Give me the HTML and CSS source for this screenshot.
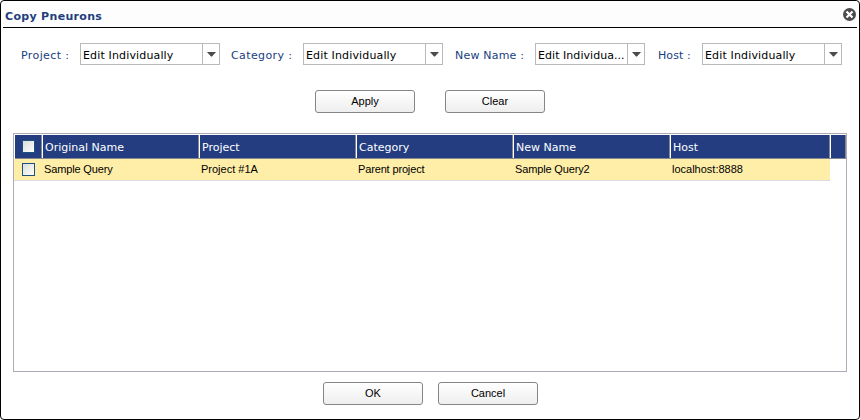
FILE: index.html
```html
<!DOCTYPE html>
<html lang="en">
<head>
<meta charset="utf-8">
<title>Copy Pneurons</title>
<link rel="stylesheet" href="styles.css">
</head>
<body>
<main class="dialog">
  <header class="titlebar">
    <h1>Copy Pneurons</h1>
    <svg class="close" width="13" height="13" viewBox="0 0 13 13" aria-label="Close"><circle cx="6.5" cy="6.5" r="6.5" fill="#4b4b4b"/><path d="M3.5 3.5 9.5 9.5M9.5 3.5 3.5 9.5" stroke="#fff" stroke-width="2.2"/></svg>
  </header>
  <section class="filters">
    <span class="label project">Project :</span>
    <div class="select"><span class="value">Edit Individually</span><span class="arrow"><svg width="9" height="5" viewBox="0 0 9 5"><path d="M0 0h9L5 4.5H4z"/></svg></span></div>
    <span class="label category">Category :</span>
    <div class="select"><span class="value">Edit Individually</span><span class="arrow"><svg width="9" height="5" viewBox="0 0 9 5"><path d="M0 0h9L5 4.5H4z"/></svg></span></div>
    <span class="label newname">New Name :</span>
    <div class="select narrow"><span class="value">Edit Individua...</span><span class="arrow"><svg width="9" height="5" viewBox="0 0 9 5"><path d="M0 0h9L5 4.5H4z"/></svg></span></div>
    <span class="label host">Host :</span>
    <div class="select"><span class="value">Edit Individually</span><span class="arrow"><svg width="9" height="5" viewBox="0 0 9 5"><path d="M0 0h9L5 4.5H4z"/></svg></span></div>
  </section>
  <div class="actions"><button>Apply</button><button>Clear</button></div>
  <section class="grid">
    <div class="row head">
      <div class="cell"><span class="check"></span></div>
      <div class="cell">Original Name</div>
      <div class="cell">Project</div>
      <div class="cell">Category</div>
      <div class="cell">New Name</div>
      <div class="cell">Host</div>
      <div class="cell"></div>
    </div>
    <div class="row item">
      <div class="cell"><span class="check"></span></div>
      <div class="cell tight">Sample Query</div>
      <div class="cell">Project #1A</div>
      <div class="cell tight">Parent project</div>
      <div class="cell tight">Sample Query2</div>
      <div class="cell">localhost:8888</div>
    </div>
  </section>
  <footer class="footer"><button>OK</button><button>Cancel</button></footer>
</main>
</body>
</html>
```
FILE: styles.css
```css
* { box-sizing: border-box; }
body { margin: 0; background: #fff; font-family: "DejaVu Sans", Verdana, sans-serif; font-size: 11px; color: #000; }
.dialog { width: 860px; height: 420px; border: 1px solid #000; border-radius: 4px; background: #fff; overflow: hidden; }
.titlebar { display: flex; justify-content: space-between; height: 27px; margin: 0 2px; padding: 7px 0 0 2px; border-bottom: 1px solid #000; background: #fdfdfd; }
h1 { margin: 0; font-size: 11px; line-height: 18px; font-weight: bold; letter-spacing: .32px; color: #233d80; }
.close { margin-right: 1px; }
.filters { display: flex; margin-top: 15px; padding-left: 20px; height: 22px; line-height: 25px; white-space: nowrap; }
.label { letter-spacing: .4px; color: #17407f; }
.project { width: 59px; }
.category { width: 72px; margin-left: 11px; }
.newname { width: 80px; margin-left: 12px; letter-spacing: .2px; }
.host { width: 44px; margin-left: 13px; letter-spacing: .1px; }
.select { display: flex; width: 140px; height: 22px; border: 1px solid #b7babc; }
.narrow { width: 110px; }
.value { flex: 1; min-width: 0; padding-left: 2px; line-height: 23px; letter-spacing: .15px; }
.narrow .value { letter-spacing: .05px; }
.arrow { display: flex; align-items: center; justify-content: center; width: 17px; padding-top: 1px; border-left: 1px solid #b7babc; }
.arrow path { fill: #4b4b4b; }
button { width: 100px; height: 23px; padding: 0 0 2px; border: 1px solid #858688; border-radius: 3px; background: linear-gradient(#fff, #eee); font: 11px "Liberation Sans", Arial, sans-serif; color: #000; }
.actions { display: flex; gap: 30px; margin-top: 25px; padding-left: 314px; }
.grid { width: 834px; height: 239px; margin: 20px 0 0 12px; border: 1px solid #aaadb5; }
.row { display: grid; }
.head { grid-template-columns: 26px 157px 157px 157px 157px 160px 17px; width: 831px; height: 24px; margin: 1px 0 0 1px; background: #233d80; border-bottom: 1px solid #85878f; color: #fff; line-height: 25px; }
.head .cell { height: 23px; padding-left: 3px; border-left: 1px solid #85878f; box-shadow: inset 1px 0 #fff; }
.head .cell:first-child { padding-left: 7px; border-left: 0; box-shadow: none; }
.head .cell:last-child { border-right: 1px solid #85878f; }
.item { grid-template-columns: 28px 157px 157px 157px 157px 160px; width: 816px; height: 22px; background: #ffeea8; border-bottom: 1px solid #ddd; font-family: "Liberation Sans", Arial, sans-serif; line-height: 21px; }
.item .cell { padding-left: 2px; }
.item .cell:first-child { padding-left: 8px; }
.tight { letter-spacing: -.15px; }
.check { display: block; width: 13px; height: 13px; margin-top: 4px; border: 1px solid #1d5180; background: linear-gradient(135deg, #dcdcd7, #fff); }
.head .check { margin-top: 5px; }
.footer { display: flex; gap: 15px; margin-top: 10px; padding-left: 322px; }
```
